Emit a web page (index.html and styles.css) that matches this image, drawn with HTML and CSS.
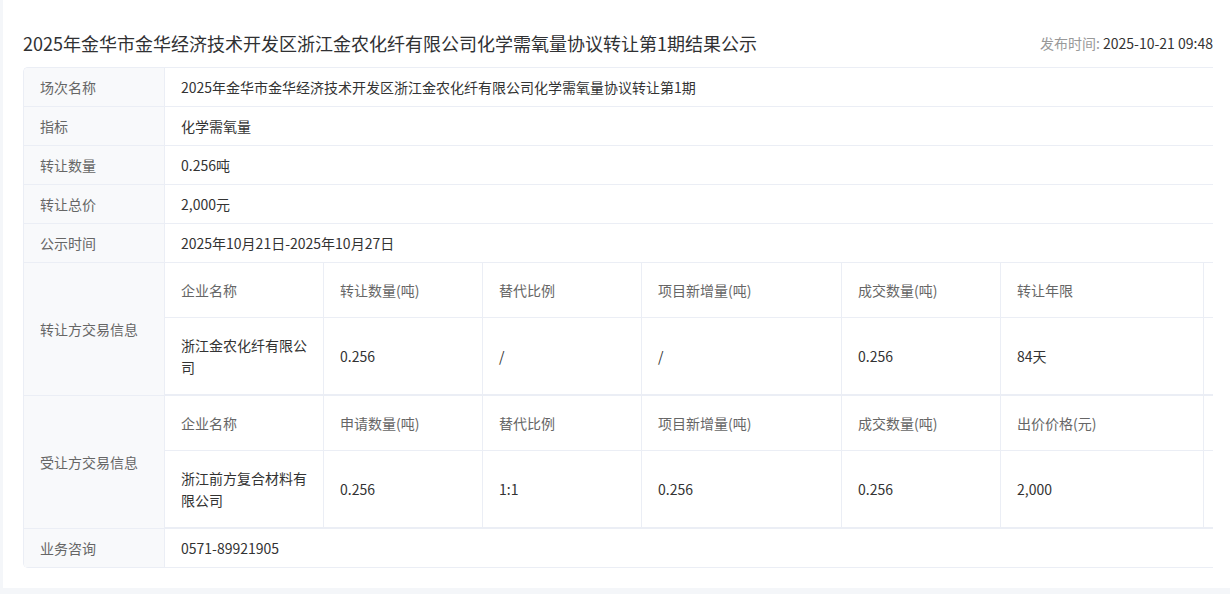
FILE: index.html
```html
<!DOCTYPE html>
<html lang="zh-CN">
<head>
<meta charset="utf-8">
<title>结果公示</title>
<link rel="stylesheet" href="styles.css">
</head>
<body>
<div class="panel">
  <div class="head">
    <h1 class="title">2025年金华市金华经济技术开发区浙江金农化纤有限公司化学需氧量协议转让第1期结果公示</h1>
    <div class="pub"><span class="pub-label">发布时间: </span><span class="pub-value">2025-10-21 09:48</span></div>
  </div>
  <div class="box">
    <table class="info">
      <colgroup><col class="c-label"><col></colgroup>
      <tr><td class="lbl">场次名称</td><td class="val">2025年金华市金华经济技术开发区浙江金农化纤有限公司化学需氧量协议转让第1期</td></tr>
      <tr><td class="lbl">指标</td><td class="val">化学需氧量</td></tr>
      <tr><td class="lbl">转让数量</td><td class="val">0.256吨</td></tr>
      <tr><td class="lbl">转让总价</td><td class="val">2,000元</td></tr>
      <tr><td class="lbl">公示时间</td><td class="val">2025年10月21日-2025年10月27日</td></tr>
      <tr>
        <td class="lbl">转让方交易信息</td>
        <td class="nest-cell">
          <table class="nest">
            <colgroup><col class="n1"><col class="n2"><col class="n3"><col class="n4"><col class="n5"><col class="n6"><col class="n7"></colgroup>
            <tr class="nh"><td>企业名称</td><td>转让数量(吨)</td><td>替代比例</td><td>项目新增量(吨)</td><td>成交数量(吨)</td><td>转让年限</td><td class="gap"></td></tr>
            <tr><td>浙江金农化纤有限公司</td><td>0.256</td><td>/</td><td>/</td><td>0.256</td><td>84天</td><td class="gap"></td></tr>
          </table>
        </td>
      </tr>
      <tr>
        <td class="lbl">受让方交易信息</td>
        <td class="nest-cell">
          <table class="nest">
            <colgroup><col class="n1"><col class="n2"><col class="n3"><col class="n4"><col class="n5"><col class="n6"><col class="n7"></colgroup>
            <tr class="nh"><td>企业名称</td><td>申请数量(吨)</td><td>替代比例</td><td>项目新增量(吨)</td><td>成交数量(吨)</td><td>出价价格(元)</td><td class="gap"></td></tr>
            <tr><td>浙江前方复合材料有限公司</td><td>0.256</td><td>1:1</td><td>0.256</td><td>0.256</td><td>2,000</td><td class="gap"></td></tr>
          </table>
        </td>
      </tr>
      <tr class="last"><td class="lbl">业务咨询</td><td class="val">0571-89921905</td></tr>
    </table>
  </div>
</div>
</body>
</html>
```
FILE: styles.css
```css
html, body {
  margin: 0;
  padding: 0;
}
body {
  background: #f4f6f9;
  font-family: "Noto Sans CJK SC", "Noto Sans", sans-serif;
  color: #333;
  width: 1230px;
  height: 594px;
  overflow: hidden;
}
.panel {
  margin-left: 3px;
  background: #fff;
  height: 588px;
  box-sizing: border-box;
  padding: 31px 17px 0 20px;
}
.head {
  display: flex;
  justify-content: space-between;
  align-items: center;
  height: 24px;
  margin-bottom: 12px;
}
.title {
  margin: 0;
  font-size: 18px;
  font-weight: normal;
  line-height: 24px;
  color: #303133;
  white-space: nowrap;
}
.pub {
  font-size: 14px;
  line-height: 24px;
  white-space: nowrap;
}
.pub-label { color: #999; }
.pub-value { color: #333; }

.box {
  border-top: 1px solid #ebeef5;
  border-left: 1px solid #ebeef5;
  border-radius: 5px 0 0 5px;
  overflow: hidden;
}
.info {
  width: 100%;
  table-layout: fixed;
  border-collapse: separate;
  border-spacing: 0;
  font-size: 14px;
}
.c-label { width: 141px; }
.info td {
  border-bottom: 1px solid #ebeef5;
  line-height: 22px;
  vertical-align: middle;
}
.info .lbl {
  background: #f8f9fb;
  color: #666;
  padding: 8px 16px;
  border-right: 1px solid #ebeef5;
}
.info .val {
  padding: 8px 16px;
  color: #333;
}
.info .nest-cell {
  padding: 0;
}
.nest {
  width: 100%;
  table-layout: fixed;
  border-collapse: separate;
  border-spacing: 0;
  font-size: 14px;
}
.n1 { width: 159px; }
.n2 { width: 159px; }
.n3 { width: 159px; }
.n4 { width: 200px; }
.n5 { width: 159px; }
.n6 { width: 203px; }
.n7 { width: 9px; }
.info .nest td {
  padding: 16px 10px 16px 16px;
  border-right: 1px solid #ebeef5;
  border-bottom: 1px solid #ebeef5;
  line-height: 22px;
  color: #333;
  vertical-align: middle;
}
.info .nest .nh td {
  color: #666;
}
.info .nest td.gap {
  padding: 0;
  border-right: none;
}
```
